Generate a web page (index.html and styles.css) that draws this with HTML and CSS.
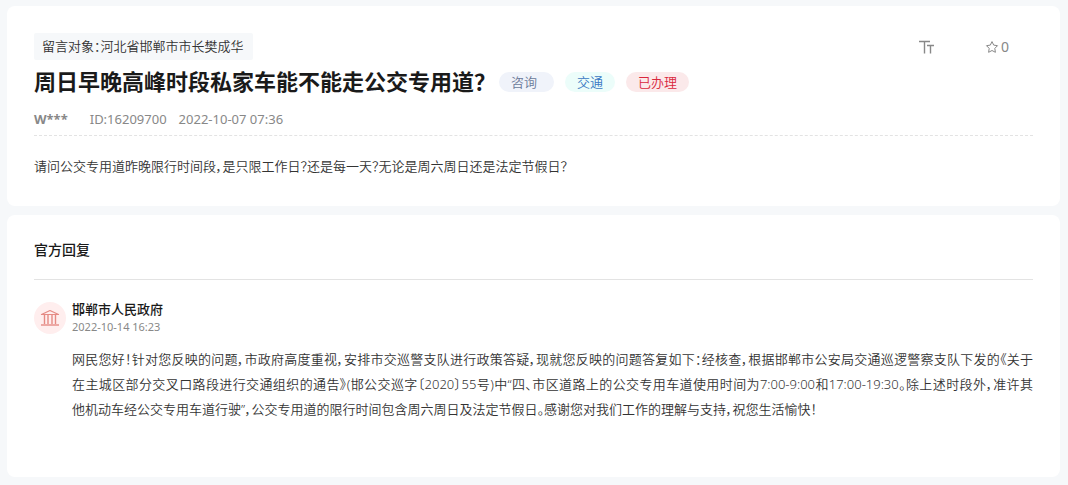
FILE: index.html
```html
<!DOCTYPE html>
<html lang="zh-CN">
<head>
  <meta charset="UTF-8">
  <meta name="viewport" content="width=device-width, initial-scale=1.0">
  <title>周日早晚高峰时段私家车能不能走公交专用道？</title>
  <link rel="stylesheet" href="styles.css">
</head>
<body>
  <main>
    <section class="card message">
      <div class="top-row">
        <p class="target">留言对象：河北省邯郸市市长樊成华</p>
        <div class="tools">
          <button type="button" class="tool" aria-label="字号">
            <svg width="16" height="16" viewBox="0 0 16 16" fill="none" stroke="currentColor">
              <path d="M0 2.5H11M5.5 2.5V14.5M8 6.5H15M11.5 6.5V14.5" stroke-width="1.4"/>
            </svg>
          </button>
          <button type="button" class="tool">
            <svg width="14" height="14" viewBox="0 0 14 14" fill="none" stroke="currentColor">
              <path d="M7 1.6L8.7 5.1L12.5 5.7L9.8 8.4L10.4 12.3L7 10.5L3.6 12.3L4.2 8.4L1.5 5.7L5.3 5.1Z" stroke-linejoin="round"/>
            </svg>
            <span>0</span>
          </button>
        </div>
      </div>
      <div class="title-row">
        <h1>周日早晚高峰时段私家车能不能走公交专用道？</h1>
        <span class="tag tag-type">咨询</span>
        <span class="tag tag-field">交通</span>
        <span class="tag tag-state">已办理</span>
      </div>
      <div class="meta">
        <strong>W***</strong>
        <span>ID:16209700</span>
        <time>2022-10-07 07:36</time>
      </div>
      <p class="question">请问公交专用道昨晚限行时间段，是只限工作日？还是每一天？无论是周六周日还是法定节假日？</p>
    </section>

    <section class="card reply">
      <h2>官方回复</h2>
      <div class="reply-item">
        <div class="avatar">
          <svg width="20" height="18" viewBox="0 0 20 18" fill="none" stroke="currentColor">
            <path d="M1.5 5.5L10 1.5L18.5 5.5Z" stroke-width="1.2" stroke-linejoin="round"/>
            <path d="M4.5 6V15M8 6V15M12 6V15M15.5 6V15" stroke-width="1.4"/>
            <path d="M1 16H19" stroke-width="1.4"/>
          </svg>
        </div>
        <div class="reply-body">
          <h3>邯郸市人民政府</h3>
          <time>2022-10-14 16:23</time>
          <p class="reply-text">
            <span class="line">网民您好！针对您反映的问题，市政府高度重视，安排市交巡警支队进行政策答疑，现就您反映的问题答复如下：经核查，根据邯郸市公安局交通巡逻警察支队下发的《关于</span>
            <span class="line">在主城区部分交叉口路段进行交通组织的通告》(邯公交巡字〔2020〕55号)中“四、市区道路上的公交专用车道使用时间为7:00-9:00和17:00-19:30。除上述时段外，准许其</span>
            他机动车经公交专用车道行驶”，公交专用道的限行时间包含周六周日及法定节假日。感谢您对我们工作的理解与支持，祝您生活愉快！
          </p>
        </div>
      </div>
    </section>
  </main>
</body>
</html>
```
FILE: styles.css
```css
* {
  box-sizing: border-box;
}
body {
  margin: 0;
  padding: 6px 8px 8px 7px;
  background: #f6f8fa;
  color: #333;
  font-family: "Noto Sans", "Noto Sans CJK SC", sans-serif;
  font-size: 13px;
  font-weight: 350;
  line-height: 20px;
  font-feature-settings: "palt";
}
h1, h2, h3, p {
  margin: 0;
}
main {
  display: grid;
  gap: 9px;
}
.card {
  background: #fff;
  border-radius: 8px;
  padding: 27px;
}
.top-row {
  display: flex;
  justify-content: space-between;
  align-items: center;
}
.target {
  background: #f6f8fa;
  border-radius: 2px;
  padding: 3px 9px 4px 8px;
}
.tools {
  display: flex;
  gap: 50px;
  padding-right: 24px;
}
.tool {
  display: flex;
  align-items: center;
  gap: 2px;
  padding: 0;
  border: 0;
  background: none;
  color: #888;
  font: inherit;
  font-size: 14px;
  font-weight: 400;
  cursor: pointer;
}
.title-row {
  display: flex;
  align-items: center;
  gap: 11px;
  margin-top: 6px;
}
h1 {
  margin-right: 3px;
  padding-bottom: 2px;
  color: #1a1a1a;
  font-size: 22px;
  line-height: 30px;
}
.tag {
  border-radius: 10px;
  padding: 0 12px;
}
.tag-type {
  padding-right: 17px;
  background: #f0f3fa;
  color: #6b7a99;
}
.tag-field {
  background: #ecfdfa;
  color: #3a78c3;
}
.tag-state {
  background: #fbe9ea;
  color: #d9263c;
}
.meta {
  display: flex;
  gap: 12px;
  padding: 11px 0 6px;
  border-bottom: 1px dashed #e3e3e3;
  color: #888;
  font-weight: 400;
}
.meta strong {
  margin-right: 10px;
}
.question {
  padding: 20px 0 3px;
}
.reply {
  padding: 25px 27px 55px;
}
h2 {
  padding: 0 0 19px;
  border-bottom: 1px solid #e3e3e3;
  color: #1a1a1a;
  font-size: 14px;
  font-weight: 500;
}
.reply-item {
  display: flex;
  gap: 6px;
  padding-top: 19px;
}
.avatar {
  display: flex;
  flex: none;
  align-items: center;
  justify-content: center;
  width: 32px;
  height: 32px;
  margin-top: 3px;
  border-radius: 50%;
  background: #ffeeee;
  color: #e58a84;
}
.reply-body {
  flex: 1;
}
h3 {
  color: #1a1a1a;
  font-size: 13px;
  font-weight: 500;
}
.reply-body time {
  display: block;
  color: #888;
  font-size: 11px;
  font-weight: 400;
  line-height: 16px;
}
.reply-text {
  margin-top: 12px;
  line-height: 25px;
}
.line {
  display: block;
  text-align: justify;
  text-align-last: justify;
}
```
